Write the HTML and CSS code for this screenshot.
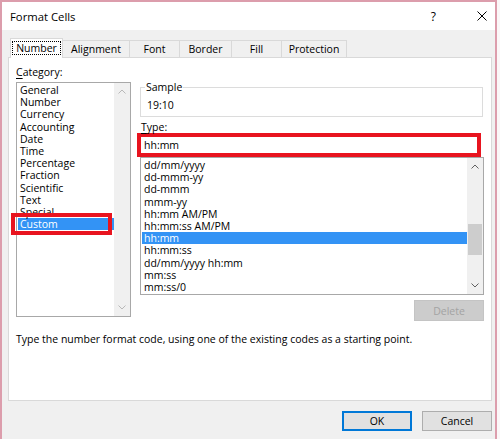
FILE: index.html
```html
<!DOCTYPE html>
<html>
<head>
<meta charset="utf-8">
<link rel="stylesheet" href="styles.css">
</head>
<body>
<div class="window">
  <div class="titlebar">
    <span class="title">Format Cells</span>
    <span class="help">?</span>
    <svg class="close" width="10" height="10" viewBox="0 0 10 10"><path d="M0.5 0.5 L9.5 9.5 M9.5 0.5 L0.5 9.5" stroke="#000" stroke-width="1" fill="none"/></svg>
  </div>
  <div class="body">
    <div class="tabs">
      <div class="tab active w-number"><span class="focus">Number</span></div>
      <div class="tab w-align">Alignment</div>
      <div class="tab w-font">Font</div>
      <div class="tab w-border">Border</div>
      <div class="tab w-fill">Fill</div>
      <div class="tab w-prot">Protection</div>
    </div>
    <div class="panel">
      <div class="cols">
        <div class="left">
          <div class="label cat-label"><u>C</u>ategory:</div>
          <div class="listbox cat">
            <ul class="items">
              <li>General</li>
              <li>Number</li>
              <li>Currency</li>
              <li>Accounting</li>
              <li>Date</li>
              <li>Time</li>
              <li>Percentage</li>
              <li>Fraction</li>
              <li>Scientific</li>
              <li>Text</li>
              <li>Special</li>
              <li class="sel">Custom</li>
            </ul>
            <div class="scroll">
              <div class="sbtn"><svg width="8" height="5" viewBox="0 0 8 5"><path d="M0.5 4.5 L4 1 L7.5 4.5" stroke="#b8b8b8" fill="none"/></svg></div>
              <div class="track"></div>
              <div class="sbtn"><svg width="8" height="5" viewBox="0 0 8 5"><path d="M0.5 0.5 L4 4 L7.5 0.5" stroke="#b8b8b8" fill="none"/></svg></div>
            </div>
            <div class="mark mark-custom"></div>
          </div>
        </div>
        <div class="right">
          <fieldset class="sample">
            <legend>Sample</legend>
            <div class="sample-val">19:10</div>
          </fieldset>
          <div class="label type-label"><u>T</u>ype:</div>
          <div class="type-input">hh:mm</div>
          <div class="listbox fmt">
            <ul class="items">
              <li>dd/mm/yyyy</li>
              <li>dd-mmm-yy</li>
              <li>dd-mmm</li>
              <li>mmm-yy</li>
              <li>hh:mm AM/PM</li>
              <li>hh:mm:ss AM/PM</li>
              <li class="sel">hh:mm</li>
              <li>hh:mm:ss</li>
              <li>dd/mm/yyyy hh:mm</li>
              <li>mm:ss</li>
              <li>mm:ss/0</li>
            </ul>
            <div class="scroll">
              <div class="sbtn"><svg width="8" height="5" viewBox="0 0 8 5"><path d="M0.5 4.5 L4 1 L7.5 4.5" stroke="#606060" fill="none"/></svg></div>
              <div class="track-top"></div>
              <div class="thumb"></div>
              <div class="track"></div>
              <div class="sbtn"><svg width="8" height="5" viewBox="0 0 8 5"><path d="M0.5 0.5 L4 4 L7.5 0.5" stroke="#606060" fill="none"/></svg></div>
            </div>
          </div>
          <div class="del-row"><button class="btn delete">Delete</button></div>
        </div>
      </div>
      <p class="desc">Type the number format code, using one of the existing codes as a starting point.</p>
    </div>
    <div class="actions">
      <button class="btn ok">OK</button>
      <button class="btn cancel">Cancel</button>
    </div>
  </div>
</div>
</body>
</html>
```

FILE: styles.css
```css
* { box-sizing: border-box; }
body {
  margin: 0;
  background: #fbf7f8;
  font-family: "Open Sans", "Noto Sans", sans-serif;
  font-size: 10.5px;
  color: #000;
}
.window {
  width: 497px;
  height: 439px;
  border: 2px solid #dc9dac;
  border-bottom: none;
  display: flex;
  flex-direction: column;
  background: #f0f0f0;
}
.titlebar {
  height: 28px;
  flex: none;
  background: #fff;
  display: flex;
  align-items: center;
  padding: 0 8px 0 8px;
}
.title { flex: 1; font-size: 11.3px; }
.help { font-size: 12px; margin-right: 41px; }
.close { display: block; }

.body {
  flex: 1;
  padding: 8px 3px 0 6px;
}
.tabs {
  display: flex;
  align-items: flex-end;
  height: 19px;
  margin-left: 2px;
}
.tab {
  height: 17px;
  border-top: 1px solid #d9d9d9;
  border-right: 1px solid #d9d9d9;
  background: #f0f0f0;
  display: flex;
  align-items: center;
  justify-content: center;
  line-height: 14px;
}
.tab.active {
  height: 20px;
  margin-bottom: -1px;
  border-left: 1px solid #d9d9d9;
  background: #fff;
  position: relative;
  z-index: 1;
  padding-bottom: 2px;
}
.focus {
  border: 1px dotted #000;
  padding: 0 3px;
  line-height: 12px;
}
.w-number { width: 53px; }
.w-align { width: 67px; }
.w-font { width: 50px; }
.w-border { width: 52px; }
.w-fill { width: 50px; }
.w-prot { width: 65px; }

.panel {
  height: 344px;
  background: #fff;
  border: 1px solid #d9d9d9;
  padding: 7px 7px 0 7px;
}
.cols {
  display: flex;
  gap: 9px;
}
.left { width: 115px; }
.right { width: 344px; padding-top: 16px; }
.label { line-height: 14px; }
.label u { text-decoration-thickness: 1px; text-underline-offset: 2px; }
.cat-label { height: 17px; }

.listbox {
  display: flex;
  border: 1px solid #a8a8a8;
  background: #fff;
  position: relative;
}
.items {
  list-style: none;
  margin: 0;
  padding: 1px 0 0 1px;
  flex: 1;
  line-height: 12.2px;
  white-space: nowrap;
}
.items li { padding-left: 2px; height: 12.2px; }
.items li.sel { background: #3393f5; color: #fff; }
.cat { height: 235px; }
.fmt { height: 138px; }
.scroll {
  width: 16px;
  background: #f0f0f0;
  display: flex;
  flex-direction: column;
}
.sbtn {
  height: 17px;
  display: flex;
  align-items: center;
  justify-content: center;
}
.sbtn svg { display: block; }
.track { flex: 1; }
.track-top { height: 49px; }
.thumb {
  height: 31px;
  margin: 0 1px;
  background: #cdcdcd;
}
.mark {
  position: absolute;
  border: 4px solid #e8141f;
}
.mark-custom {
  left: -6px;
  top: 130px;
  width: 101px;
  height: 22px;
}

.sample {
  margin: 0 1px 0 0;
  padding: 0 6px 5px 5px;
  border: 1px solid #dcdcdc;
  height: 36px;
}
.sample legend {
  padding: 0 1px;
  margin-left: -1px;
  line-height: 12px;
}
.sample-val {
  line-height: 12px;
  margin-top: 6px;
  padding-left: 1px;
}
.type-label {
  line-height: 11px;
  height: 16px;
  padding-top: 5px;
  padding-left: 1px;
}
.type-input {
  margin-left: -3px;
  width: 344px;
  height: 24px;
  border: 4px solid #e8141f;
  padding-left: 3px;
  line-height: 16px;
  background: #fff;
}
.del-row {
  display: flex;
  justify-content: flex-end;
  margin-top: 5px;
}
.btn {
  font-family: inherit;
  font-size: 10.5px;
  height: 20px;
  width: 70px;
  padding: 0;
  background: #e1e1e1;
  border: 1px solid #adadad;
  color: #000;
}
.delete {
  height: 21px;
  background: #cccccc;
  border-color: #c4c4c4;
  color: #a3a3a3;
}
.desc {
  margin: 11px 0 0 0;
  line-height: 14px;
}
.actions {
  display: flex;
  justify-content: flex-end;
  gap: 10px;
  margin-top: 10px;
}
.ok { border: 2px solid #0078d7; }
```
